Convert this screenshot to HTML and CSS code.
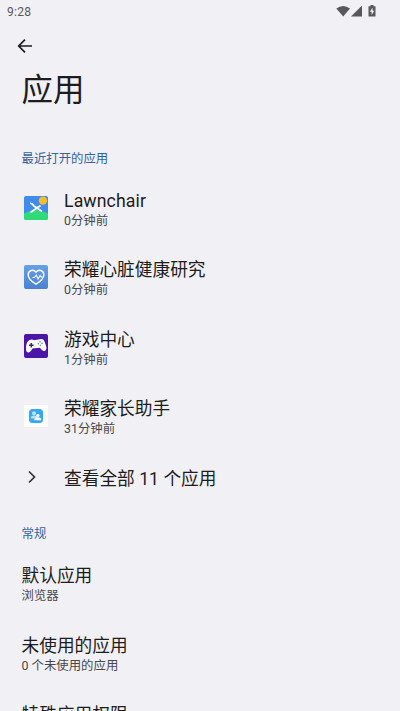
FILE: index.html
```html
<!DOCTYPE html>
<html lang="zh-CN">
<head>
<meta charset="utf-8">
<title>应用</title>
<link rel="stylesheet" href="styles.css">
</head>
<body>
<header class="status">
  <span class="time">9:28</span>
  <svg class="status-icons" viewBox="0 0 42 14" aria-hidden="true">
    <g fill="#58585b">
      <path d="M0.3 3.4Q7.2-1.6 14 3.4L7.2 11.5Z"/>
      <path d="M26 0.5V11.5H15Z"/>
      <path d="M34.5 0h3v1.2h2V11.5h-7V1.2h2Z"/>
    </g>
    <path d="M36.6 2.6L33.8 6.8H35.6V10L38.3 5.8H36.6Z" fill="#f0f0f5"/>
  </svg>
</header>
<div class="toolbar">
  <svg class="back" viewBox="0 0 16 16" aria-hidden="true"><path d="M15 8H2M8 1.7L1.7 8L8 14.3"/></svg>
</div>
<h1 class="title">应用</h1>
<h2 class="section">最近打开的应用</h2>
<ul class="list">
  <li class="row">
    <svg class="icon" viewBox="0 0 24 24" aria-hidden="true">
      <defs><clipPath id="r1"><rect width="24" height="24" rx="2"/></clipPath></defs>
      <g clip-path="url(#r1)"><rect width="24" height="24" fill="#3f8cec"/><path d="M0 17.5Q12 10.5 24 17.5V24H0Z" fill="#2fda78"/></g>
      <circle cx="19" cy="4.6" r="4.2" fill="#f5bd27"/>
      <path d="M6 7.5Q8 7 10 10L18 15.5M16.5 9.5L6.5 16.5" fill="none" stroke="#fff" stroke-width="1.8"/>
    </svg>
    <div class="text"><div class="name latin">Lawnchair</div><div class="sub">0分钟前</div></div>
  </li>
  <li class="row">
    <svg class="icon" viewBox="0 0 24 24" aria-hidden="true">
      <defs><linearGradient id="g2" x2="0" y2="1"><stop stop-color="#68a0e4"/><stop offset="1" stop-color="#4a82d2"/></linearGradient></defs>
      <rect width="24" height="24" rx="2" fill="url(#g2)"/>
      <path d="M12 19.2Q4.2 14.5 4.2 9.7C4.2 5.5 9.5 3.6 12 7.2C14.5 3.6 19.8 5.5 19.8 9.7Q19.8 14.5 12 19.2Z" fill="none" stroke="#fff" stroke-width="1.4"/>
      <path d="M8.5 12.5h2L12.3 10l1.8 4 2-3.5 1 1.5h1.5" fill="none" stroke="#fff" stroke-width="1.1"/>
    </svg>
    <div class="text"><div class="name">荣耀心脏健康研究</div><div class="sub">0分钟前</div></div>
  </li>
  <li class="row">
    <svg class="icon" viewBox="0 0 24 24" aria-hidden="true">
      <rect width="24" height="24" rx="2" fill="#4b15a8"/>
      <path d="M5 6.3Q8 5 10 6.2L16 5.2Q19.5 4.5 20.5 7.5L22.4 13Q22.5 17 20 17Q18.5 17 16 13.7L8.5 14.6Q6 19 4 18.5Q1.8 18 2 14.5Q2 8 5 6.3Z" fill="#fff"/>
      <path d="M5 11.3h4.6M7.3 9v4.6" stroke="#35314a" stroke-width="1.5"/>
      <g fill="#44a568"><circle cx="16" cy="7.8" r=".8"/><circle cx="18" cy="9.3" r=".8"/><circle cx="14.3" cy="9.7" r=".8"/><circle cx="16.4" cy="11.2" r=".8"/></g>
    </svg>
    <div class="text"><div class="name">游戏中心</div><div class="sub">1分钟前</div></div>
  </li>
  <li class="row">
    <svg class="icon" viewBox="0 0 24 24" aria-hidden="true">
      <rect y="1" width="24" height="22" fill="#fff"/><rect x="5" y="5" width="14" height="14" rx="3.5" fill="#36a9f2"/>
      <circle cx="10" cy="9.3" r="2" fill="#b8e0fb"/><path d="M6.8 14.5q0-3 3.2-3t3 3Z" fill="#b8e0fb"/>
      <circle cx="13.8" cy="11.6" r="1.7" fill="#fff"/><path d="M10.2 16.3q0-3 3.6-3t3.4 3Z" fill="#fff"/>
    </svg>
    <div class="text"><div class="name">荣耀家长助手</div><div class="sub">31分钟前</div></div>
  </li>
  <li class="row all">
    <svg class="icon" viewBox="0 0 24 24" aria-hidden="true"><path class="chevron" d="M5 6.5L10.5 12L5 17.5"/></svg>
    <div class="text"><div class="name">查看全部 11 个应用</div></div>
  </li>
</ul>
<h2 class="section general">常规</h2>
<ul class="list">
  <li class="row"><div class="text"><div class="name">默认应用</div><div class="sub">浏览器</div></div></li>
  <li class="row"><div class="text"><div class="name">未使用的应用</div><div class="sub">0 个未使用的应用</div></div></li>
  <li class="row last"><div class="text"><div class="name">特殊应用权限</div></div></li>
</ul>
</body>
</html>
```
FILE: styles.css
```css
* { box-sizing: border-box; }
html { height: 100%; overflow: hidden; }
body {
  height: 100%;
  margin: 0;
  overflow: hidden;
  background: #f0f0f5;
  color: #1d1d20;
  font-family: Roboto, "Noto Sans CJK SC", sans-serif;
}
.status { display: flex; justify-content: space-between; height: 24px; padding: 5px 24px 0 7px; }
.time { font-size: 12px; line-height: 14px; color: #58585b; letter-spacing: .3px; }
.status-icons { width: 42px; height: 14px; margin-right: -2px; }
.toolbar { height: 47px; padding: 14px 17px; }
.back { display: block; width: 16px; height: 16px; fill: none; stroke: #1d1d20; stroke-width: 1.7; }
.title { margin: 0; padding-left: 21.5px; font-size: 31.5px; line-height: 40px; font-weight: 400; }
.section { margin: 0; padding: 39px 21.5px 0; font-size: 12.4px; line-height: 18px; font-weight: 400; color: #35649a; }
.list { margin: 0; padding: 5px 21.5px 0; list-style: none; }
.row { display: flex; align-items: center; height: 69.3px; }
.icon { flex: none; width: 24px; height: 24px; margin: 0 16px 0 2.5px; }
.text { padding-top: 5px; }
.name { font-size: 17.7px; line-height: 22px; white-space: nowrap; }
.latin { letter-spacing: .1px; }
.sub { font-size: 12.4px; line-height: 18px; color: #48484c; white-space: nowrap; }
.all { height: 54px; }
.all .text { padding-top: 3px; }
.chevron { fill: none; stroke: #333337; stroke-width: 1.7; }
.general { padding-top: 21px; }
.last { align-items: flex-start; padding-top: 12px; }
.last .text { padding-top: 5px; }
```
